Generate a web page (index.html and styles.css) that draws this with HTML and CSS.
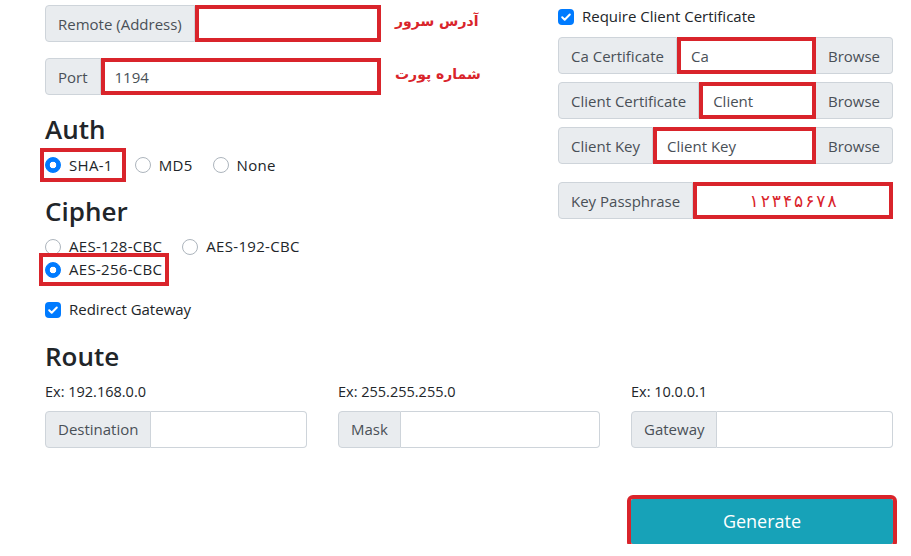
FILE: index.html
```html
<!DOCTYPE html>
<html lang="en">
<head>
<meta charset="utf-8">
<title>OpenVPN Config</title>
<link rel="stylesheet" href="styles.css">
</head>
<body>
<div class="page">
  <div class="top">
    <div class="left">
      <div class="arow">
        <div class="ig w336">
          <span class="igt first">Remote (Address)</span>
          <span class="field red"></span>
        </div>
        <span class="note">آدرس سرور</span>
      </div>
      <div class="arow mt16">
        <div class="ig w336">
          <span class="igt first">Port</span>
          <span class="field red">1194</span>
        </div>
        <span class="note">شماره پورت</span>
      </div>

      <h3 class="h auth">Auth</h3>
      <div class="radios r-auth">
        <label class="radio boxed-a"><span class="rc on"></span>SHA-1</label>
        <label class="radio"><span class="rc"></span>MD5</label>
        <label class="radio"><span class="rc"></span>None</label>
      </div>

      <h3 class="h cipher">Cipher</h3>
      <div class="radios r-cipher">
        <label class="radio"><span class="rc"></span>AES-128-CBC</label>
        <label class="radio"><span class="rc"></span>AES-192-CBC</label>
        <label class="radio boxed-c"><span class="rc on"></span>AES-256-CBC</label>
      </div>

      <label class="check redirect"><span class="cb"><svg viewBox="0 0 16 16" width="16" height="16"><path d="M4.2 8.3l2.5 2.5 5.1-5.3" fill="none" stroke="#fff" stroke-width="2" stroke-linecap="round" stroke-linejoin="round"/></svg></span>Redirect Gateway</label>
    </div>

    <div class="right">
      <label class="check"><span class="cb"><svg viewBox="0 0 16 16" width="16" height="16"><path d="M4.2 8.3l2.5 2.5 5.1-5.3" fill="none" stroke="#fff" stroke-width="2" stroke-linecap="round" stroke-linejoin="round"/></svg></span>Require Client Certificate</label>
      <div class="ig mt9">
        <span class="igt first">Ca Certificate</span>
        <span class="field red">Ca</span>
        <span class="igt last">Browse</span>
      </div>
      <div class="ig mt8">
        <span class="igt first">Client Certificate</span>
        <span class="field red">Client</span>
        <span class="igt last">Browse</span>
      </div>
      <div class="ig mt8">
        <span class="igt first">Client Key</span>
        <span class="field red">Client Key</span>
        <span class="igt last">Browse</span>
      </div>
      <div class="ig mt18">
        <span class="igt first">Key Passphrase</span>
        <span class="field red pass"><span>۱</span><span>۲</span><span>۳</span><span>۴</span><span>۵</span><span>۶</span><span>۷</span><span>۸</span></span>
      </div>
    </div>
  </div>

  <h3 class="h route">Route</h3>
  <div class="routes">
    <div class="rcol">
      <div class="ex">Ex: 192.168.0.0</div>
      <div class="ig">
        <span class="igt first">Destination</span>
        <span class="field end"></span>
      </div>
    </div>
    <div class="rcol">
      <div class="ex">Ex: 255.255.255.0</div>
      <div class="ig">
        <span class="igt first">Mask</span>
        <span class="field end"></span>
      </div>
    </div>
    <div class="rcol">
      <div class="ex">Ex: 10.0.0.1</div>
      <div class="ig">
        <span class="igt first">Gateway</span>
        <span class="field end"></span>
      </div>
    </div>
  </div>

  <div class="actions">
    <button class="gen" type="button">Generate</button>
  </div>
</div>
</body>
</html>
```

FILE: styles.css
```css
* { box-sizing: border-box; }

body {
  margin: 0;
  background: #fff;
  color: #212529;
  font-family: "Open Sans", "Liberation Sans", sans-serif;
  font-size: 15px;
}

.page {
  padding: 5px 18px 0 45px;
}

.top {
  display: grid;
  grid-template-columns: 513px 1fr;
}

.left, .right {
  display: flex;
  flex-direction: column;
}

.left { align-items: flex-start; }
.right { align-items: stretch; }

/* input groups */
.ig {
  display: flex;
  height: 37px;
}

.w336 { width: 336px; }

.igt {
  display: flex;
  align-items: center;
  padding: 0 12px;
  background: #e9ecef;
  border: 1px solid #ced4da;
  color: #495057;
  white-space: nowrap;
}

.igt.first { border-radius: 4px 0 0 4px; }
.igt.last { border-radius: 0 4px 4px 0; border-left: 0; }

.field {
  flex: 1;
  display: flex;
  align-items: center;
  padding: 0 12px;
  background: #fff;
  border: 1px solid #ced4da;
  border-left: 0;
  color: #495057;
  min-width: 0;
}

.field.end { border-radius: 0 4px 4px 0; }

.field.red {
  border: 4px solid #d9242b;
  padding: 0 10px;
}

.field.pass {
  justify-content: center;
  gap: 2px;
  color: #d9242b;
  font-family: "DejaVu Sans", sans-serif;
  font-size: 17px;
}

/* annotations */
.arow {
  display: flex;
  align-items: center;
  gap: 14px;
}

.note {
  color: #d9242b;
  font-family: "DejaVu Sans", sans-serif;
  font-weight: bold;
  font-size: 14px;
  direction: rtl;
  margin-top: -6px;
}

.mt16 { margin-top: 16px; }
.mt9 { margin-top: 9px; }
.mt8 { margin-top: 8px; }
.mt18 { margin-top: 18px; }

/* headings */
.h {
  margin: 0;
  font-size: 26px;
  font-weight: 600;
  line-height: 1.25;
  color: #212529;
}

.auth { margin-top: 18px; }
.cipher { margin-top: 18px; }
.route { margin-top: 19px; }

/* radios */
.radios {
  display: flex;
  flex-wrap: wrap;
}

.r-auth { margin-top: 8px; }
.r-cipher { margin-top: 8px; width: 300px; }

.radio {
  display: inline-flex;
  align-items: center;
  gap: 8px;
  line-height: 23px;
  margin-right: 20px;
  color: #212529;
  letter-spacing: 0.3px;
}

.rc {
  width: 16px;
  height: 16px;
  border-radius: 50%;
  border: 1px solid #adb5bd;
  background: #fff;
  flex: none;
}

.rc.on {
  border-color: #007bff;
  background: radial-gradient(circle, #fff 0 3px, #007bff 3.6px);
}

.boxed-a {
  border: 4px solid #d9242b;
  padding: 2px 9px 1px 1px;
  margin: -6px 9px -5px -5px;
}

.boxed-c {
  border: 4px solid #d9242b;
  padding: 1px 3px 1px 2px;
  margin: -5px 0 -5px -6px;
}

/* checkboxes */
.check {
  display: inline-flex;
  align-items: center;
  gap: 8px;
  line-height: 23px;
}

.redirect { margin-top: 17px; }

.cb {
  width: 16px;
  height: 16px;
  border-radius: 4px;
  background: #007bff;
  display: flex;
  flex: none;
}

/* route */
.routes {
  display: grid;
  grid-template-columns: repeat(3, 1fr);
  column-gap: 31px;
  margin-top: 7px;
}

.ex {
  font-size: 14.5px;
  line-height: 23px;
  margin-bottom: 8px;
}

.actions {
  display: flex;
  justify-content: flex-end;
  margin-top: 51px;
}

.gen {
  width: 262px;
  height: 45px;
  background: #17a2b8;
  color: #fff;
  border: 1px solid #17a2b8;
  border-radius: 2px;
  font-family: "Open Sans", "Liberation Sans", sans-serif;
  font-size: 18px;
  outline: 4px solid #d9242b;
  cursor: pointer;
}
```
